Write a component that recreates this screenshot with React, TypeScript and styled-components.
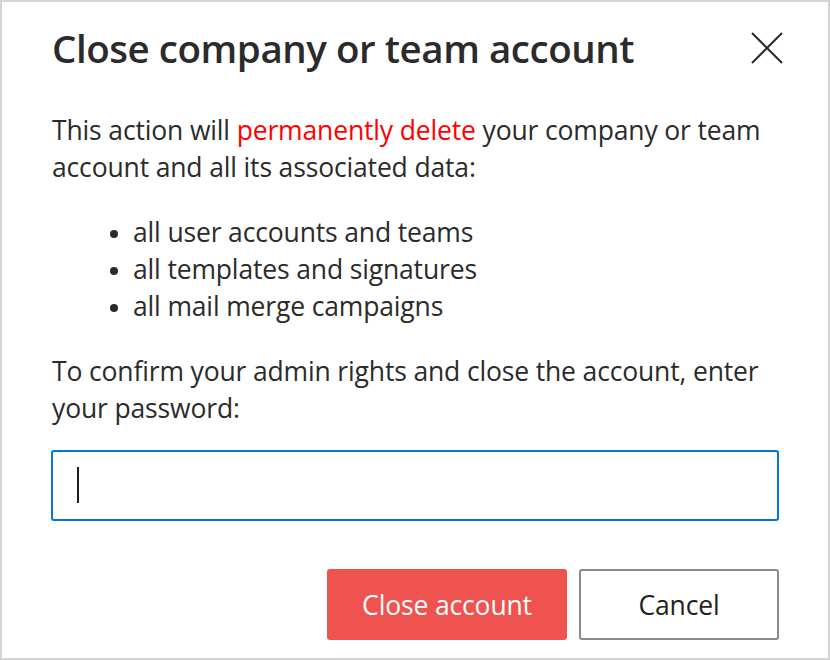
import React from "react";
import styled, { createGlobalStyle } from "styled-components";

const GlobalStyle = createGlobalStyle`
  html, body {
    margin: 0;
    padding: 0;
    background: #ffffff;
  }
  * {
    box-sizing: border-box;
  }
`;

const Dialog = styled.div`
  width: 830px;
  height: 660px;
  border: 2px solid #d4d4d4;
  background: #fff;
  display: flex;
  flex-direction: column;
  padding: 22px 49px 18px 49px;
  font-family: "Open Sans", "Noto Sans", sans-serif;
  color: #2b2b2b;
`;

const Header = styled.div`
  display: flex;
  align-items: center;
  justify-content: space-between;
  height: 48px;
`;

const Title = styled.h1`
  margin: 0 0 0 1px;
  font-size: 38.5px;
  font-weight: 600;
  letter-spacing: -0.45px;
  color: #2b2b2b;
`;

const CloseButton = styled.button`
  border: none;
  background: none;
  padding: 0;
  width: 34px;
  height: 34px;
  display: flex;
  align-items: center;
  justify-content: center;
  cursor: pointer;
  margin-right: -5px;
`;

const Text = styled.p`
  margin: 0 0 0 1px;
  font-size: 26.5px;
  line-height: 37px;
  letter-spacing: -0.15px;
`;

const Intro = styled(Text)`
  margin-top: 40px;
`;

const Danger = styled.span`
  color: #ff0000;
`;

const List = styled.ul`
  margin: 28px 0 0 0;
  padding: 0 0 0 82px;
  font-size: 26.5px;
  line-height: 37px;
  letter-spacing: -0.15px;

  li::marker {
    font-size: 22px;
  }
`;

const Confirm = styled(Text)`
  margin-top: 28px;
`;

const Field = styled.div`
  position: relative;
  margin-top: 23px;
`;

const PasswordInput = styled.input`
  display: block;
  height: 71px;
  width: 100%;
  border: 2px solid #0078d4;
  border-radius: 3px;
  padding: 0 24px;
  font-size: 26px;
  font-family: inherit;
  outline: none;
  caret-color: transparent;
`;

const Caret = styled.span`
  position: absolute;
  left: 26px;
  top: 17px;
  width: 2px;
  height: 36px;
  background: #1e1e1e;
  pointer-events: none;
`;

const Actions = styled.div`
  margin-top: auto;
  display: flex;
  justify-content: flex-end;
  gap: 12px;
`;

const ActionButton = styled.button<{ $primary?: boolean }>`
  height: 71px;
  width: ${(p) => (p.$primary ? "240px" : "200px")};
  border-radius: 3px;
  font-family: inherit;
  font-size: 26.5px;
  letter-spacing: -0.15px;
  cursor: pointer;
  border: ${(p) => (p.$primary ? "none" : "2px solid #8a8a8a")};
  background: ${(p) => (p.$primary ? "#ef5350" : "#ffffff")};
  color: ${(p) => (p.$primary ? "#ffffff" : "#222222")};
`;

const items = [
  "all user accounts and teams",
  "all templates and signatures",
  "all mail merge campaigns",
];

export default function App() {
  return (
    <>
      <GlobalStyle />
      <Dialog>
        <Header>
          <Title>Close company or team account</Title>
          <CloseButton aria-label="Close">
            <svg width="32" height="32" viewBox="0 0 32 32">
              <path
                d="M1 1 L31 31 M31 1 L1 31"
                stroke="#2b2b2b"
                strokeWidth="2"
                fill="none"
              />
            </svg>
          </CloseButton>
        </Header>
        <Intro>
          This action will <Danger>permanently delete</Danger> your company or
          team account and all its associated data:
        </Intro>
        <List>
          {items.map((item) => (
            <li key={item}>{item}</li>
          ))}
        </List>
        <Confirm>
          To confirm your admin rights and close the account, enter your
          password:
        </Confirm>
        <Field>
          <PasswordInput type="password" />
          <Caret />
        </Field>
        <Actions>
          <ActionButton $primary>Close account</ActionButton>
          <ActionButton>Cancel</ActionButton>
        </Actions>
      </Dialog>
    </>
  );
}
